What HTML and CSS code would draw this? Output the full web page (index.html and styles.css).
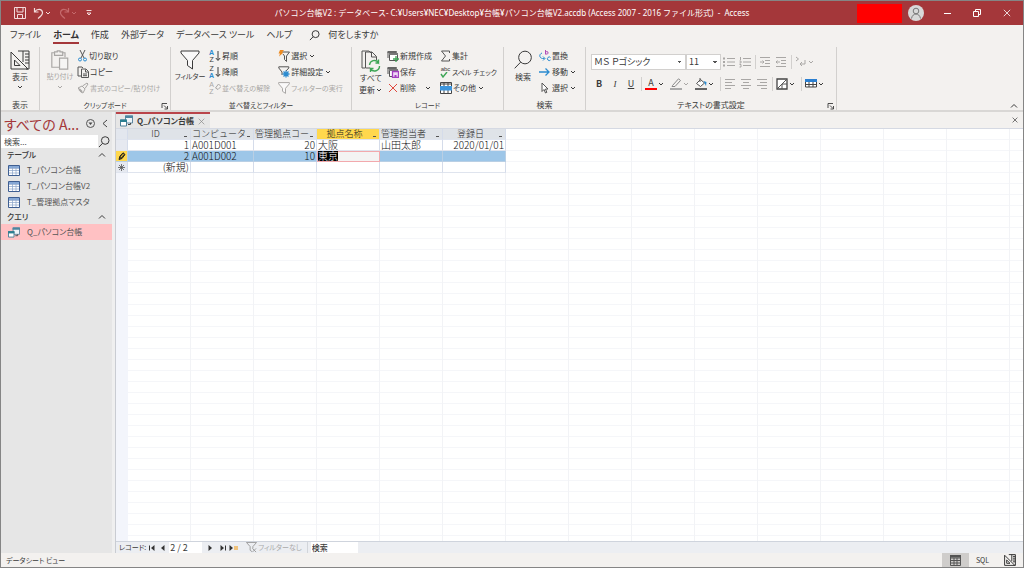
FILE: index.html
```html
<!DOCTYPE html>
<html lang="ja">
<head>
<meta charset="utf-8">
<title>パソコン台帳V2 - Access</title>
<link rel="stylesheet" href="styles.css">
</head>
<body>
<svg class="sprite" aria-hidden="true">
  <symbol id="chev" viewBox="0 0 8 8"><path d="M2 3l2 2 2-2" fill="none" stroke="currentColor"/></symbol>
  <symbol id="up" viewBox="0 0 8 8"><path d="M1 5.500l3-3 3 3" fill="none" stroke="currentColor"/></symbol>
  <symbol id="lens" viewBox="0 0 12 12"><circle vector-effect="non-scaling-stroke" cx="7.200" cy="4.500" r="3.800" fill="none" stroke="currentColor"/><path vector-effect="non-scaling-stroke" d="M4.600 7.300L1 11" stroke="currentColor"/></symbol>
  <symbol id="design" viewBox="0 0 20 20"><path vector-effect="non-scaling-stroke" d="M1 2v17h17zM4.500 10v5.500H10z" fill="none" stroke="currentColor"/><path vector-effect="non-scaling-stroke" d="M8 1h11v18h-3M13 1v11M15 4h4M15 7h4M15 10h4M15 13h4" fill="none" stroke="currentColor"/></symbol>
  <symbol id="funnel" viewBox="0 0 20 20"><path vector-effect="non-scaling-stroke" d="M1 1h18v2l-6.500 7.500V19l-5-3.500v-5L1 3z" fill="#fff" fill-opacity=".6" stroke="currentColor"/></symbol>
  <symbol id="tbl" viewBox="0 0 12 11"><path d="M.5.5h11v10H.5z" fill="#fff" stroke="#3f5f92"/><path d="M1 1h10v2H1z" fill="#86a9d8"/><path d="M4.500 1v9M8 1v9M1 3.500h10M1 5.500h10M1 8h10" stroke="#8aa3c9" stroke-width=".7"/></symbol>
  <symbol id="qry" viewBox="0 0 13 12"><path d="M5.500 1h7v7h-7z" fill="#eef4f8" stroke="#5e87a0"/><path d="M5 .5h8v2.500H5z" fill="#4d86a0"/><path d="M.5 5h6v6h-6z" fill="#fff" stroke="#4d7f98"/><path d="M0 4.500h7V7H0z" fill="#2c7f91"/><path d="M8 9.500h2.500V8" fill="none" stroke="#444"/></symbol>
  <symbol id="launch" viewBox="0 0 8 8"><path d="M1 6V1.500h5M3 3.500l3 3M6.500 4v3h-3" fill="none" stroke="currentColor" stroke-width=".9"/></symbol>
  <symbol id="cross" viewBox="0 0 10 10"><path d="M1 1l8 8M9 1L1 9" stroke="currentColor"/></symbol>
  <symbol id="form" viewBox="0 0 12 12"><path d="M1 8V2h9" fill="none" stroke="#555"/><path d="M.5 1h9v2h-9z" fill="#666"/><path d="M2.500 3.500h8v7h-8z" fill="#fff" stroke="#555"/><path d="M2 3h9v2H2z" fill="#777"/></symbol>
  <symbol id="clip" viewBox="0 0 20 22"><path d="M4.500 3H1v16h8M12 3h3.500v5M4 2h3V1h3v1h3v4H4z" fill="none" stroke="currentColor" stroke-width="1.300"/><path d="M9.500 9h9v12h-9z" fill="#f6f5f4" stroke="currentColor" stroke-width="1.300"/></symbol>
  <symbol id="brush" viewBox="0 0 12 12"><path d="M1 6l4-2 3 3-2 4-2-1-1-2zM5.500 4L10 1l1 1-3 4.500" fill="none" stroke="currentColor"/><path d="M2 7l3 3" stroke="currentColor" stroke-width="2"/></symbol>
  <symbol id="darrow" viewBox="0 0 6 12"><path d="M3 1v9M.8 8L3 10.500 5.200 8" fill="none" stroke="currentColor"/></symbol>
</svg>
<div class="window">
  <header class="titlebar">
    <div class="quick">
      <button aria-label="上書き保存"><svg width="12" height="12" viewBox="0 0 12 12"><path d="M.5.500h11v11h-11zM3 1v4h6V1M3.500 11V7.500h5V11" fill="none" stroke="currentColor"/></svg></button>
      <button aria-label="元に戻す"><svg width="11" height="12" viewBox="0 0 11 12"><path d="M1.500 1v4h4M1.500 5C4 1.500 9 1.500 9.500 5.500 9.700 8 7 10 5 11.500" fill="none" stroke="currentColor" stroke-width="1.200"/></svg><svg width="8" height="8"><use href="#chev"/></svg></button>
      <button class="dim" aria-label="やり直し"><svg width="11" height="12" viewBox="0 0 11 12"><path d="M9.500 1v4h-4M9.500 5C7 1.500 2 1.500 1.500 5.500 1.300 8 4 10 6 11.500" fill="none" stroke="currentColor" stroke-width="1.200"/></svg><svg width="8" height="8"><use href="#chev"/></svg></button>
      <button aria-label="カスタマイズ"><svg width="8" height="8" viewBox="0 0 8 8"><path d="M1.500 1.500h5M2 4l2 2 2-2z" fill="none" stroke="currentColor"/></svg></button>
    </div>
    <h1 class="doc-title">パソコン台帳V2 : データベース- C:¥Users¥NEC¥Desktop¥台帳¥パソコン台帳V2.accdb (Access 2007 - 2016 ファイル形式)&nbsp; -&nbsp; Access</h1>
    <div class="account">
      <span class="mask"></span>
      <button class="avatar" aria-label="アカウント"><svg width="12" height="12" viewBox="0 0 12 12"><circle cx="6" cy="4" r="2.800" fill="none" stroke="currentColor"/><path d="M1.500 11.500C2 8.500 4 7 6 7s4 1.500 4.500 4.500" fill="none" stroke="currentColor"/></svg></button>
      <button class="win" aria-label="最小化"><svg width="8" height="8" viewBox="0 0 8 8"><path d="M1 4.500h7" stroke="currentColor"/></svg></button>
      <button class="win" aria-label="元のサイズに戻す"><svg width="8" height="8" viewBox="0 0 8 8"><path d="M.5 2.500h5v5h-5zM2.500 2V.500h5v5H6" fill="none" stroke="currentColor"/></svg></button>
      <button class="win" aria-label="閉じる"><svg width="8" height="8"><use href="#cross"/></svg></button>
    </div>
  </header>

  <nav class="tabs">
    <a href="#">ファイル</a><a href="#" class="on">ホーム</a><a href="#">作成</a><a href="#">外部データ</a><a href="#">データベース ツール</a><a href="#">ヘルプ</a>
    <a href="#" class="tell"><svg width="11" height="11"><use href="#lens"/></svg>何をしますか</a>
  </nav>

  <div class="ribbon">
    <section class="group g-view">
      <div class="body"><button class="big"><svg width="20" height="20"><use href="#design"/></svg><span>表示</span><svg width="8" height="8"><use href="#chev"/></svg></button></div>
      <h2>表示</h2>
    </section>
    <section class="group g-clip">
      <div class="body">
        <button class="big off tight"><svg width="20" height="20"><use href="#clip"/></svg><span>貼り付け</span><svg width="8" height="8"><use href="#chev"/></svg></button>
        <div class="stack">
          <button><svg width="11" height="12" viewBox="0 0 11 12"><path d="M3 0l4 8M8 0L4 8" stroke="#555" fill="none"/><circle cx="3" cy="9.500" r="1.500" fill="none" stroke="#2b8bd0"/><circle cx="8" cy="9.500" r="1.500" fill="none" stroke="#2b8bd0"/></svg>切り取り</button>
          <button><svg width="12" height="12" viewBox="0 0 12 12"><path d="M4 10H1V1h4l1 1M4.500 3H9l2.500 2.500v6h-7zM8.500 3.500V6H11M6 8h4M6 9.700h4" fill="none" stroke="#555"/></svg>コピー</button>
          <button class="off tight"><svg width="12" height="12"><use href="#brush"/></svg>書式のコピー/貼り付け</button>
        </div>
      </div>
      <h2 class="tight">クリップボード</h2><button class="launch" aria-label="クリップボードの設定"><svg width="8" height="8"><use href="#launch"/></svg></button>
    </section>
    <section class="group g-sort">
      <div class="body">
        <button class="big tight"><svg width="20" height="20"><use href="#funnel"/></svg><span>フィルター</span></button>
        <div class="stack">
          <button><span class="az"><b>A</b>Z</span><svg width="6" height="12"><use href="#darrow"/></svg>昇順</button>
          <button><span class="az">Z<b>A</b></span><svg width="6" height="12"><use href="#darrow"/></svg>降順</button>
          <button class="off tight"><span class="az">A<br>Z</span><svg width="6" height="12" viewBox="0 0 6 12"><path d="M.5 6l3-4L6 4.500l-3 3z" fill="none" stroke="currentColor"/></svg>並べ替えの解除</button>
        </div>
        <div class="stack s2">
          <button><svg width="12" height="12" viewBox="0 0 12 12"><path d="M3 2h8.500L8.500 6v5.500l-2-2V6L5 4" fill="none" stroke="#555"/><path d="M2 0h4L4 2.500h1.500L1 6.500 2 3.500H.500z" fill="#ed8b22"/></svg>選択<svg width="8" height="8"><use href="#chev"/></svg></button>
          <button><svg width="12" height="12" viewBox="0 0 12 12"><path d="M4 9V6L.8 2V.800h10V2L8 5" fill="none" stroke="#555"/><path d="M8 4.500v7M4.500 8h7M5.500 5.500l5 5M10.500 5.500l-5 5" stroke="#2b8bd0" stroke-width="1.300"/></svg>詳細設定<svg width="8" height="8"><use href="#chev"/></svg></button>
          <button class="off tight"><svg width="12" height="12"><use href="#funnel"/></svg>フィルターの実行</button>
        </div>
      </div>
      <h2 class="tight">並べ替えとフィルター</h2>
    </section>
    <section class="group g-rec">
      <div class="body">
        <button class="big"><svg width="20" height="22" viewBox="0 0 20 22"><path d="M4 18H1V1h7l2 2M9 18H4.500V2H11l4.500 4.500V10M10.500 2v5h5" fill="none" stroke="#555"/><path d="M8.500 15a5 5 0 019-2.500V9.500M18.500 16a5 5 0 01-9 3v3M17.500 13h-3M9.500 18.500h3" fill="none" stroke="#3da555" stroke-width="1.400"/></svg><span>すべて</span><span class="pair">更新<svg width="8" height="8"><use href="#chev"/></svg></span></button>
        <div class="stack">
          <button><svg width="12" height="12" viewBox="0 0 12 12"><use href="#form"/><path d="M9 6v6M6 9h6" stroke="#3da555" stroke-width="1.300"/></svg>新規作成</button>
          <button><svg width="12" height="12" viewBox="0 0 12 12"><use href="#form"/><path d="M5.500 5.500h6v6h-6z" fill="#efd8f5" stroke="#a33fc0" stroke-width="1.300"/><path d="M7.500 9h2v3h-2z" fill="#a33fc0"/></svg>保存</button>
          <button><svg class="red" width="12" height="10"><use href="#cross"/></svg>削除<svg class="far" width="8" height="8"><use href="#chev"/></svg></button>
        </div>
        <div class="stack s2">
          <button><svg width="11" height="12" viewBox="0 0 11 12"><path d="M9.500 3V1H1.500l4 5-4 5h8V9" fill="none" stroke="#555"/></svg>集計</button>
          <button class="tight"><span class="abc">abc<svg width="8" height="6" viewBox="0 0 8 6"><path d="M1 2l2 3 4-5" fill="none" stroke="#3da555" stroke-width="1.400"/></svg></span>スペル チェック</button>
          <button><svg width="12" height="12" viewBox="0 0 12 12"><path d="M.5.500h11v11H.500zM4 0v12M8 0v12M0 2h12" fill="#fff" stroke="#444"/><path d="M0 4h12v4.500H0z" fill="#3d95dc"/></svg>その他<svg width="8" height="8"><use href="#chev"/></svg></button>
        </div>
      </div>
      <h2 class="tight">レコード</h2>
    </section>
    <section class="group g-find">
      <div class="body">
        <button class="big"><svg width="20" height="20"><use href="#lens"/></svg><span>検索</span></button>
        <div class="stack">
          <button><svg width="12" height="12" viewBox="0 0 12 12"><path d="M6.500 0v4.500M6.500 3.200a1.300 1.300 0 112.500 0 1.300 1.300 0 01-2.500 0" fill="none" stroke="#b04bb8"/><path d="M11.500 7.500a1.800 1.800 0 100 2.500M3 3C0 4 0 8 3.500 8.500H5.500M4 6.500l2 2-2 2" fill="none" stroke="#2b8bd0"/></svg>置換</button>
          <button><svg width="12" height="12" viewBox="0 0 12 12"><path d="M0 6h10M6.500 2.500L10 6l-3.500 3.500" fill="none" stroke="#2b8bd0" stroke-width="1.300"/></svg>移動<svg width="8" height="8"><use href="#chev"/></svg></button>
          <button><svg width="12" height="12" viewBox="0 0 12 12"><path d="M3 1v8.500l2-2 1.500 3.500 1.300-.6L6.500 7H9z" fill="#fff" stroke="#555"/></svg>選択<svg width="8" height="8"><use href="#chev"/></svg></button>
        </div>
      </div>
      <h2>検索</h2>
    </section>
    <section class="group g-text">
      <div class="body rows">
        <div class="line">
          <select class="face" aria-label="フォント"><option>ＭＳ Ｐゴシック</option></select><select class="size" aria-label="フォント サイズ"><option>11</option></select>
          <button class="ic off" aria-label="箇条書き"><svg width="12" height="12" viewBox="0 0 12 12"><path d="M4 2.500h8M4 6h8M4 9.500h8" stroke="currentColor"/><path d="M0 2.500h2M0 6h2M0 9.500h2" stroke="currentColor" stroke-width="2"/></svg></button>
          <button class="ic off" aria-label="段落番号"><svg width="12" height="12" viewBox="0 0 12 12"><path d="M4 2.500h8M4 6h8M4 9.500h8M1.500 1v3M.5 5h1.500v2H.5M.5 8.500h1.500v2.500H.5" fill="none" stroke="currentColor"/></svg></button>
          <i class="sep"></i>
          <button class="ic off" aria-label="インデントを減らす"><svg width="12" height="12" viewBox="0 0 12 12"><path d="M1 1.500h10M6 4.500h5M6 7.500h5M1 10.500h10M1 6h4M3.500 4.500L5 6 3.500 7.500" fill="none" stroke="currentColor"/></svg></button>
          <button class="ic off" aria-label="インデントを増やす"><svg width="12" height="12" viewBox="0 0 12 12"><path d="M1 1.500h10M6 4.500h5M6 7.500h5M1 10.500h10M1 6h4M2.500 4.500L1 6l1.500 1.500" fill="none" stroke="currentColor"/></svg></button>
          <i class="sep"></i>
          <button class="ic drop off" aria-label="文字の方向"><svg width="12" height="12" viewBox="0 0 12 12"><path d="M1 1l2.500 2L1 5M10 4v4H5M7 6L5 8l2 2" fill="none" stroke="currentColor"/></svg><svg width="8" height="8"><use href="#chev"/></svg></button>
        </div>
        <div class="line">
          <button class="ic" aria-label="太字"><b>B</b></button><button class="ic" aria-label="斜体"><em>I</em></button><button class="ic" aria-label="下線"><u>U</u></button>
          <i class="sep"></i>
          <button class="ic drop" aria-label="フォントの色"><span class="fc">A</span><svg width="8" height="8"><use href="#chev"/></svg></button>
          <button class="ic drop off" aria-label="強調の色"><svg width="12" height="12" viewBox="0 0 12 12"><path d="M2.500 7.500L8.500.800l2 1.700L5 8.500H2z" fill="none" stroke="#888"/><path d="M0 10h12v2H0z" fill="#aaa"/></svg><svg width="8" height="8"><use href="#chev"/></svg></button>
          <button class="ic drop" aria-label="背景の色"><svg width="12" height="12" viewBox="0 0 12 12"><path d="M1.500 5.500l4-4 4 3.500-4 3.500zM5 0v4" fill="#fff" stroke="#555"/><path d="M8.500 3l3 1-.5 4z" fill="#2b8bd0"/><path d="M0 10h12v2H0z" fill="#666"/></svg><svg width="8" height="8"><use href="#chev"/></svg></button>
          <i class="sep"></i>
          <button class="ic off" aria-label="左揃え"><svg width="12" height="12" viewBox="0 0 12 12"><path d="M1 1.500h10M1 4.500h7M1 7.500h10M1 10.500h6" stroke="currentColor"/></svg></button>
          <button class="ic off" aria-label="中央揃え"><svg width="12" height="12" viewBox="0 0 12 12"><path d="M1 1.500h10M3 4.500h6M1 7.500h10M3 10.500h6" stroke="currentColor"/></svg></button>
          <button class="ic off" aria-label="右揃え"><svg width="12" height="12" viewBox="0 0 12 12"><path d="M1 1.500h10M4 4.500h7M1 7.500h10M5 10.500h6" stroke="currentColor"/></svg></button>
          <i class="sep"></i>
          <button class="ic drop" aria-label="枠線"><svg width="12" height="12" viewBox="0 0 12 12"><path d="M1 1h10v10H1z" fill="#fff" stroke="#444" stroke-width="1.300"/><path d="M1 11L11 1M6 6v5M6 6h5" stroke="#555"/></svg><svg width="8" height="8"><use href="#chev"/></svg></button>
          <i class="sep"></i>
          <button class="ic drop" aria-label="行の色"><svg width="12" height="12" viewBox="0 0 12 12"><path d="M.5 2h11v7H.500zM4 2v7M8 2v7M0 6.500h12" fill="#fff" stroke="#444"/><path d="M0 1h12v3H0z" fill="#2b7fd0"/></svg><svg width="8" height="8"><use href="#chev"/></svg></button>
        </div>
      </div>
      <h2>テキストの書式設定</h2><button class="launch" aria-label="書式の設定"><svg width="8" height="8"><use href="#launch"/></svg></button>
    </section>
    <button class="collapse" aria-label="リボンを折りたたむ"><svg width="8" height="8"><use href="#up"/></svg></button>
  </div>

  <div class="work">
    <aside class="nav">
      <div class="nav-head"><h2>すべての A...</h2>
        <button aria-label="メニュー"><svg width="9" height="9" viewBox="0 0 9 9"><circle cx="4.500" cy="4.500" r="4" fill="none" stroke="#555"/><path d="M2.500 3.500h4l-2 2.500z" fill="#444"/></svg></button>
        <button aria-label="閉じる"><svg width="8" height="9" viewBox="0 0 8 9"><path d="M6 1L2 4.500 6 8" fill="none" stroke="#444"/></svg></button></div>
      <div class="nav-find"><input type="text" placeholder="検索..." aria-label="検索"><button aria-label="検索の実行"><svg width="12" height="12"><use href="#lens"/></svg></button></div>
      <button class="cat">テーブル<svg width="8" height="8"><use href="#up"/></svg></button>
      <a class="item" href="#"><svg width="12" height="11"><use href="#tbl"/></svg>T_パソコン台帳</a>
      <a class="item" href="#"><svg width="12" height="11"><use href="#tbl"/></svg>T_パソコン台帳V2</a>
      <a class="item" href="#"><svg width="12" height="11"><use href="#tbl"/></svg>T_管理拠点マスタ</a>
      <button class="cat">クエリ<svg width="8" height="8"><use href="#up"/></svg></button>
      <a class="item sel" href="#"><svg width="12" height="11"><use href="#qry"/></svg>Q_パソコン台帳</a>
    </aside>
    <main class="doc">
      <div class="doc-tabs">
        <div class="doc-tab"><svg width="13" height="12"><use href="#qry"/></svg><span>Q_パソコン台帳</span><button aria-label="タブを閉じる"><svg width="7" height="7"><use href="#cross"/></svg></button></div>
        <button class="doc-close" aria-label="閉じる"><svg width="6" height="6"><use href="#cross"/></svg></button>
      </div>
      <div class="sheet">
        <table>
          <colgroup><col class="c0"><col><col><col><col><col><col></colgroup>
          <thead><tr><th class="corner" aria-label="すべて選択"></th><th>ID</th><th class="l">コンピュータ</th><th class="l">管理拠点コー</th><th class="hot">拠点名称</th><th class="l">管理担当者</th><th>登録日</th></tr></thead>
          <tbody>
            <tr><td class="rs"></td><td class="n">1</td><td>A001D001</td><td class="n">20</td><td>大阪</td><td>山田太郎</td><td class="n">2020/01/01</td></tr>
            <tr class="cur"><td class="rs"><svg width="9" height="9" viewBox="0 0 9 9"><path d="M2 7.500L3 4 6 .800l2 1.700L5 6.500z" fill="#5d4c10" stroke="#222"/><path d="M4 5l2.500-3" stroke="#e9c63c"/></svg></td><td class="n">2</td><td>A001D002</td><td class="n">10</td><td class="edit"><mark>東京</mark></td><td></td><td></td></tr>
            <tr><td class="rs"><svg width="7" height="7" viewBox="0 0 7 7"><path d="M3.500 0v7M0 3.500h7M1 1l5 5M6 1L1 6" stroke="#555" stroke-width=".8"/></svg></td><td class="n">(新規)</td><td></td><td></td><td></td><td></td><td></td></tr>
          </tbody>
        </table>
      </div>
      <div class="recnav">
        <label for="rec" class="tight">レコード:</label>
        <button aria-label="先頭"><svg width="6" height="6" viewBox="0 0 6 6"><path d="M.5.500v5" stroke="#333"/><path d="M5.500 0v6L2 3z" fill="#333"/></svg></button>
        <button class="b2" aria-label="前"><svg width="6" height="6" viewBox="0 0 6 6"><path d="M4.500 0v6L1 3z" fill="#333"/></svg></button>
        <input id="rec" type="text" value="2 / 2">
        <button class="b3" aria-label="次"><svg width="6" height="6" viewBox="0 0 6 6"><path d="M1.500 0v6L5 3z" fill="#333"/></svg></button>
        <button aria-label="最後"><svg width="6" height="6" viewBox="0 0 6 6"><path d="M5.500.500v5" stroke="#333"/><path d="M.5 0v6L4 3z" fill="#333"/></svg></button>
        <button class="b4" aria-label="新しいレコード"><svg width="9" height="6" viewBox="0 0 9 6"><path d="M.5 0v6L4 3z" fill="#333"/><path d="M5 1h4v4H5z" fill="#efc27c"/></svg></button>
        <button class="nofilter tight"><svg width="11" height="11" viewBox="0 0 12 12"><path d="M.5.500h11L7.500 5v2M.5.500L4.500 5v4l2 1.500M7 7l4 4M11 7l-4 4" fill="none" stroke="#999"/></svg>フィルターなし</button>
        <input class="q" type="text" value="検索" aria-label="レコードの検索">
      </div>
    </main>
  </div>

  <footer class="status"><span class="tight">データシート ビュー</span>
    <div class="views">
      <button class="on" aria-label="データシート ビュー"><svg width="11" height="11" viewBox="0 0 11 11"><path d="M.5.500h10v10H.500zM1 3h9M1 5.500h9M1 8h9M4 3v7M7 3v7" fill="none" stroke="#555"/><path d="M0 0h11v2.500H0z" fill="#555"/></svg></button>
      <button class="tight">SQL</button>
      <button aria-label="デザイン ビュー"><svg width="12" height="12"><use href="#design"/></svg></button>
    </div>
  </footer>
</div>
</body>
</html>
```
FILE: styles.css
```css
* { box-sizing: border-box; }
html, body { height: 100%; }
body {
  margin: 0;
  font: 8px/12px "Noto Sans CJK JP", "Noto Sans", sans-serif;
  font-feature-settings: "palt";
  color: #3a3a3a;
}
button, input, select { font: inherit; color: inherit; font-feature-settings: inherit; margin: 0; padding: 0; border: 0; background: none; border-radius: 0; }
button { display: flex; align-items: center; white-space: nowrap; }
a { color: inherit; text-decoration: none; }
h1, h2 { margin: 0; font: inherit; }
svg { display: block; flex: none; }
.sprite { position: absolute; width: 0; height: 0; }
.window { height: 100%; display: flex; flex-direction: column; border: 1px solid #858585; background: #f3f1ef; overflow: hidden; }
.tight { font-size: 7px; }

/* title bar */
.titlebar { height: 24px; flex: none; display: grid; grid-template-columns: 1fr auto 1fr; align-items: center; background: #a4373a; color: #fff; }
.quick { display: flex; align-items: center; padding-left: 13px; gap: 7px; color: #f3dcdc; }
.quick .dim { color: #c56a6c; }
.doc-title { font: 8px/16px "Noto Sans", "Noto Sans CJK JP", sans-serif; white-space: nowrap; color: #fff; }
.account { display: flex; align-items: center; justify-content: flex-end; padding-right: 1px; }
.mask { width: 45px; height: 19px; background: #f00; margin-right: 6px; }
.avatar { width: 16px; height: 16px; border-radius: 50%; background: #d8d8d8; color: #777; justify-content: center; margin-right: 8px; }
.win { width: 30px; height: 24px; justify-content: center; }

/* ribbon tabs */
.tabs { height: 22px; flex: none; display: flex; align-items: stretch; gap: 12px; padding-left: 9px; font-size: 9px; line-height: 20px; white-space: nowrap; }
.tabs .on { font-weight: 700; color: #333; border-bottom: 2px solid #a4373a; height: 19px; }
.tabs .tell { display: flex; align-items: center; gap: 8px; margin-left: 5px; height: 20px; }

/* ribbon */
.ribbon { height: 65px; flex: none; display: flex; align-items: flex-start; border-bottom: 2px solid #d9d7d5; }
.group { position: relative; height: 63px; display: flex; flex-direction: column; border-right: 1px solid #d2d0ce; }
.group h2 { text-align: center; line-height: 10px; }
.g-view { width: 39px; }
.g-clip { width: 131px; }
.g-sort { width: 181px; }
.g-rec { width: 152px; }
.g-find { width: 82px; }
.g-text { width: 251px; }
.body { flex: 1; display: flex; padding-top: 1px; }
.big { flex: none; flex-direction: column; align-items: center; justify-content: flex-start; padding-top: 2px; width: 38px; line-height: 13px; }
.g-clip .big { width: 40px; }
.g-rec .big { line-height: 12px; }
.pair { display: flex; align-items: center; }
.off { color: #a9a7a5; }
.stack { display: grid; grid-template-rows: repeat(3, 16px); justify-items: start; align-content: start; }
.stack button { gap: 1px; }
.g-clip .stack, .g-rec .big + .stack, .g-find .stack { margin-left: -3px; }
.s2 { margin-left: 8px; }
.far { margin-left: 7px; }
.red { color: #e0483e; }
.az { font: 7px/7px "Liberation Sans", sans-serif; display: grid; width: 5px; }
.az b { font-weight: 700; color: #2b8bd0; }
.abc { font: 6px/6px "Liberation Sans", sans-serif; width: 11px; }
.launch { position: absolute; right: 1px; bottom: 0; }
.collapse { margin: auto 5px 0 auto; }
.rows { flex-direction: column; gap: 6px; padding: 7px 0 0 5px; }
.line { display: flex; align-items: center; height: 16px; }
.face, .size {
  appearance: none; height: 16px; border: 1px solid #d2d0ce; padding: 0 2px; font-size: 9px; line-height: 14px;
  background: linear-gradient(45deg, transparent 50%, #555 50%) right 5px center / 2px 2px no-repeat, linear-gradient(-45deg, transparent 50%, #555 50%) right 3px center / 2px 2px no-repeat, #fff;
}
.face { width: 95px; }
.size { width: 35px; }
.ic { width: 16px; height: 16px; justify-content: center; font-size: 9px; }
.ic.drop { width: 25px; justify-content: flex-start; padding-left: 2px; }
.ic em { font-family: "Liberation Serif", serif; }
.sep { width: 1px; height: 14px; background: #d2d0ce; margin: 0 1px 0 2px; }
.fc { width: 12px; text-align: center; line-height: 10px; border-bottom: 2px solid #f00; }

/* workspace */
.work { flex: 1; min-height: 0; display: flex; }
.nav { width: 114px; flex: none; background: #e6e6e6; border-right: 3px solid #efefef; }
.nav-head { display: flex; align-items: center; height: 23px; padding: 0 3px; gap: 6px; }
.nav-head h2 { flex: 1; font-size: 14px; line-height: 22px; color: #a4373a; white-space: nowrap; }
.nav-find { display: flex; height: 13px; }
.nav-find input { flex: 1; min-width: 0; background: #fff; padding-left: 3px; }
.nav-find input::placeholder { color: #444; opacity: 1; }
.nav-find button { width: 14px; }
.cat { width: 100%; justify-content: space-between; padding: 0 6px; height: 14px; font-weight: 500; }
.item { display: flex; align-items: center; gap: 7px; height: 16px; padding-left: 7px; color: #555; white-space: nowrap; }
.item.sel { background: #ffc1c3; }
.doc { flex: 1; min-width: 0; display: flex; flex-direction: column; border-left: 1px solid #c9ccd2; }
.doc-tabs { height: 17px; flex: none; display: flex; justify-content: space-between; border-bottom: 1px solid #d5d9e3; }
.doc-tab { display: flex; align-items: center; gap: 4px; padding: 0 5px 0 4px; width: 94px; background: #e6e6e6; border-top: 2px solid #b9444a; font-weight: 700; white-space: nowrap; }
.doc-tab button { margin-left: auto; color: #888; }
.doc-close { margin-right: 5px; color: #222; }

/* datasheet */
.sheet {
  flex: 1; min-height: 0; overflow: hidden;
  background:
    linear-gradient(#f3f5fb, #f3f5fb) 0 0 / 12px 100% no-repeat,
    repeating-linear-gradient(90deg, transparent 0 62px, #f2f3f6 62px 63px) 12px 0,
    repeating-linear-gradient(transparent 0 10px, #f5f6f9 10px 11px),
    #fff;
}
table { border-collapse: separate; border-spacing: 0; table-layout: fixed; width: 390px; font: 300 10px/10px "Noto Sans CJK JP", sans-serif; color: #111; }
col { width: 63px; }
.c0 { width: 12px; }
th, td { padding: 0 1px; height: 11px; text-align: left; white-space: nowrap; border-right: 1px solid #d5dcea; border-bottom: 1px solid #dfe4ee; }
th { font-size: 9px; font-weight: 300; color: #222; background: #dfe3e8 linear-gradient(#555, #555) right 3px top 7px / 3px 1px no-repeat; text-align: center; padding-right: 8px; }
th.l { text-align: left; }
th.hot { background-color: #ffd84d; }
th.corner { background: #e3e7ee; padding: 0; }
td { background: #fff; }
td.n { text-align: right; }
td.rs { background: #e6e9f0; padding: 0; }
.rs svg { margin: 0 auto; }
.cur td { background: #9dc6e8; border-color: #b9cfe4; }
.cur td.rs { background: #ffd84d; }
.cur td.edit { background: #f3f3f3; border-color: #f2a9ad; box-shadow: inset 1px 1px #f2a9ad; }
mark { background: #000; color: #fff; display: inline-block; height: 10px; vertical-align: top; }

/* record navigator */
.recnav { height: 12px; flex: none; display: flex; align-items: center; background: #eceef2; border-top: 1px solid #cfd4dd; padding-left: 3px; white-space: nowrap; line-height: 11px; }
.recnav button { margin-left: 3px; }
.recnav .b2 { margin-left: 5px; }
.recnav #rec { width: 33px; height: 11px; margin-left: 3px; background: #fff; font-size: 9px; padding-left: 1px; }
.recnav .b3 { margin: 0 4px 0 5px; }
.recnav .nofilter { margin-left: 8px; gap: 1px; color: #aaa; border-right: 1px solid #d2d5da; padding-right: 5px; }
.recnav .q { width: 47px; height: 11px; margin-left: 3px; background: #fff; padding-left: 1px; font-weight: 500; }

/* status bar */
.status { height: 14px; flex: none; display: flex; align-items: center; justify-content: space-between; padding-left: 5px; }
.views { display: flex; height: 14px; }
.views button { width: 27px; justify-content: center; }
.views .on { background: #cfcdcb; }
```
